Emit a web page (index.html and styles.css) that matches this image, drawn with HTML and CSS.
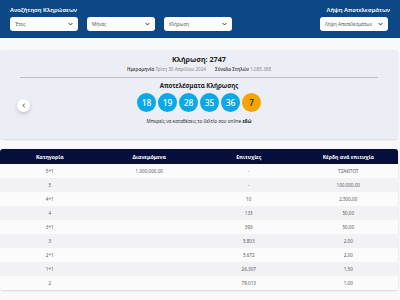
FILE: index.html
```html
<!DOCTYPE html>
<html lang="el">
<head>
<meta charset="utf-8">
<link rel="stylesheet" href="styles.css">
</head>
<body>
<header class="topbar">
  <div class="search">
    <div class="label">Αναζήτηση Κληρώσεων</div>
    <div class="selects">
      <div class="select"><span>Έτος</span><svg class="chev" viewBox="0 0 8 6"><path d="M1 1.5 L4 4.5 L7 1.5" fill="none" stroke="#333" stroke-width="1.6"/></svg></div>
      <div class="select"><span>Μήνας</span><svg class="chev" viewBox="0 0 8 6"><path d="M1 1.5 L4 4.5 L7 1.5" fill="none" stroke="#333" stroke-width="1.6"/></svg></div>
      <div class="select"><span>Κλήρωση</span><svg class="chev" viewBox="0 0 8 6"><path d="M1 1.5 L4 4.5 L7 1.5" fill="none" stroke="#333" stroke-width="1.6"/></svg></div>
    </div>
  </div>
  <div class="download">
    <div class="label">Λήψη Αποτελεσμάτων</div>
    <div class="select"><span>Λήψη Αποτελεσμάτων</span><svg class="chev" viewBox="0 0 8 6"><path d="M1 1.5 L4 4.5 L7 1.5" fill="none" stroke="#333" stroke-width="1.6"/></svg></div>
  </div>
</header>

<section class="card">
  <button class="prev"><svg viewBox="0 0 6 8"><path d="M4 1 L1.5 4 L4 7" fill="none" stroke="#333" stroke-width="1.4"/></svg></button>
  <div class="title">Κλήρωση: 2747</div>
  <div class="meta"><b>Ημερομηνία</b> Τρίτη 30 Απριλίου 2024 <span class="gap"></span><b>Σύνολο Στηλών</b> 1.085.388</div>
  <hr class="divider">
  <div class="subtitle">Αποτελέσματα Κλήρωσης</div>
  <div class="balls">
    <span class="ball">18</span>
    <span class="ball">19</span>
    <span class="ball">28</span>
    <span class="ball">35</span>
    <span class="ball">36</span>
    <span class="ball joker">7</span>
  </div>
  <div class="note">Μπορείς να καταθέσεις το δελτίο σου online <b>εδώ</b></div>
</section>

<table class="results">
  <thead>
    <tr><th>Κατηγορία</th><th>Διανεμόμενα</th><th>Επιτυχίες</th><th>Κέρδη ανά επιτυχία</th></tr>
  </thead>
  <tbody>
    <tr><td>5+1</td><td>1.000.000,00</td><td>-</td><td>ΤΖΑΚΠΟΤ</td></tr>
    <tr><td>5</td><td></td><td>-</td><td>100.000,00</td></tr>
    <tr><td>4+1</td><td></td><td>10</td><td>2.500,00</td></tr>
    <tr><td>4</td><td></td><td>133</td><td>50,00</td></tr>
    <tr><td>3+1</td><td></td><td>393</td><td>50,00</td></tr>
    <tr><td>3</td><td></td><td>5.803</td><td>2,00</td></tr>
    <tr><td>2+1</td><td></td><td>5.672</td><td>2,00</td></tr>
    <tr><td>1+1</td><td></td><td>26.307</td><td>1,50</td></tr>
    <tr><td>2</td><td></td><td>79.013</td><td>1,00</td></tr>
  </tbody>
</table>
</body>
</html>
```

FILE: styles.css
```css
* { box-sizing: border-box; }
html, body {
  margin: 0;
  padding: 0;
}
body {
  width: 400px;
  height: 300px;
  overflow: hidden;
  background: #f9f9fb;
  font-family: "Noto Sans", "DejaVu Sans", sans-serif;
  color: #333;
}

.topbar {
  height: 38px;
  background: #0b4885;
  display: flex;
  justify-content: space-between;
  padding: 0 12px 0 10px;
}
.label {
  color: #fff;
  font-size: 5.9px;
  font-weight: 600;
  line-height: 8px;
  margin-top: 6px;
  height: 11px;
}
.download .label { text-align: right; margin-right: -2px; }
.selects {
  display: flex;
  gap: 9px;
}
.select {
  width: 68px;
  height: 14px;
  background: #fff;
  border-radius: 3px;
  display: flex;
  align-items: center;
  justify-content: space-between;
  padding: 0 5px;
  font-size: 4.6px;
  color: #555;
}
.chev { width: 5px; height: 4px; }

.card {
  position: relative;
  margin: 12px 2px 10px 0;
  height: 89px;
  background: #eceef6;
  border-radius: 3px;
  box-shadow: 0 1px 2px rgba(0,0,0,0.12);
  display: flex;
  flex-direction: column;
  align-items: center;
  padding-top: 5px;
}
.title {
  font-size: 7.2px;
  font-weight: 700;
  line-height: 9px;
  color: #222;
}
.meta {
  margin-top: 2px;
  font-size: 4.6px;
  line-height: 7px;
  color: #888;
}
.meta b { color: #444; font-weight: 600; }
.meta .gap { display: inline-block; width: 8px; }
.divider {
  width: 358px;
  margin: 4px 0 0 0;
  border: 0;
  border-top: 1px solid #bcbec6;
  height: 0;
}
.subtitle {
  margin-top: 4px;
  font-size: 6.2px;
  font-weight: 700;
  line-height: 8px;
  color: #222;
}
.balls {
  margin-top: 3px;
  display: flex;
  gap: 2px;
}
.ball {
  width: 19px;
  height: 19px;
  border-radius: 50%;
  background: #0aa8e8;
  color: #fff;
  font-size: 8.5px;
  font-weight: 500;
  display: flex;
  align-items: center;
  justify-content: center;
}
.ball.joker {
  background: #f5a400;
  color: #222;
}
.note {
  margin-top: 6px;
  font-size: 4.6px;
  line-height: 7px;
  color: #333;
}
.note b { font-weight: 700; color: #111; }
.prev {
  position: absolute;
  left: 17px;
  top: 49px;
  width: 13px;
  height: 13px;
  border: 0;
  padding: 0;
  border-radius: 50%;
  background: #fff;
  box-shadow: 0 2px 4px rgba(0,0,0,0.18);
  display: flex;
  align-items: center;
  justify-content: center;
}
.prev svg { width: 4px; height: 5px; }

.results {
  width: 398px;
  border-collapse: separate;
  border-spacing: 0;
  table-layout: fixed;
  box-shadow: 0 1px 2px rgba(0,0,0,0.15);
  border-radius: 3px;
  overflow: hidden;
}
.results th {
  background: #060e3c;
  color: #fff;
  font-size: 5.2px;
  font-weight: 700;
  height: 15px;
  padding: 0;
}
.results td {
  height: 14px;
  padding: 0;
  text-align: center;
  font-size: 4.6px;
  color: #5a5a5a;
  background: #fbfbfc;
}
.results tbody tr:nth-child(even) td { background: #f2f2f5; }
```
